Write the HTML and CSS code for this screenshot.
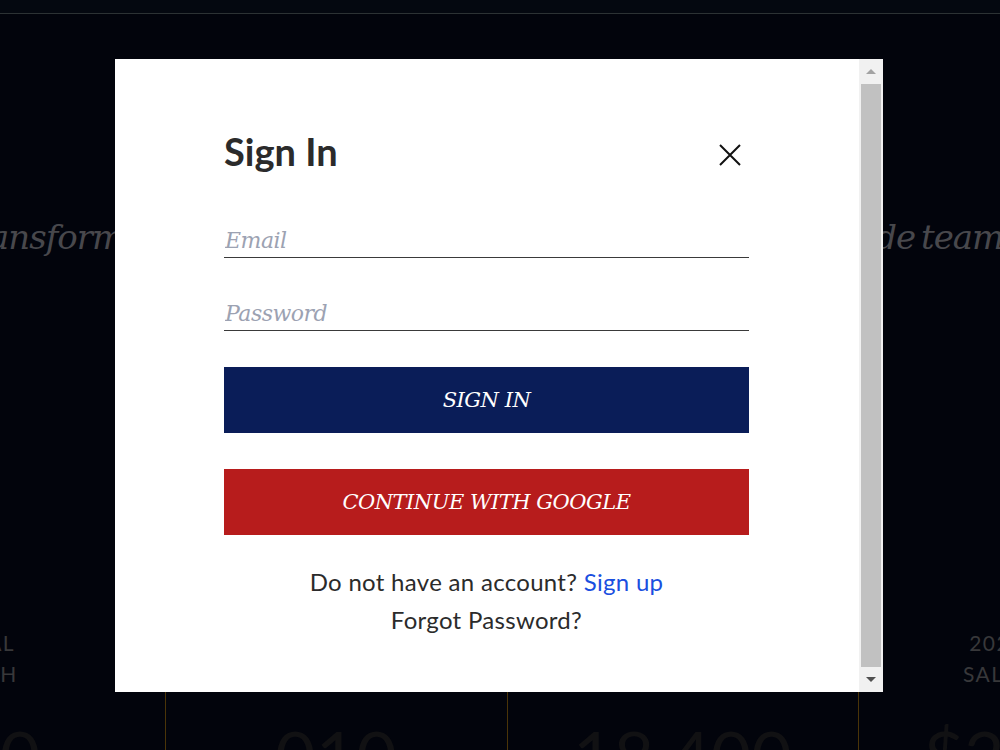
FILE: index.html
```html
<html lang="en">
<head>
    <meta charset="UTF-8">
    <meta name="viewport" content="width=device-width, initial-scale=1.0">
    <title>Sign In</title>
    <link rel="stylesheet" href="styles.css">
</head>
<body>
    <div class="topbar"></div>

    <div class="page">
        <p class="hero-line">We transform ideas into our products, built by world-class made teams</p>

        <div class="stats">
            <div class="stat stat-wide">
                <span class="stat-label">TOTAL<br>REACH</span>
                <span class="stat-num">240</span>
            </div>
            <div class="stat">
                <span class="stat-label">PROJECTS<br>DONE</span>
                <span class="stat-num">010</span>
            </div>
            <div class="stat stat-mid">
                <span class="stat-label">HAPPY<br>CLIENTS</span>
                <span class="stat-num">18,400</span>
            </div>
            <div class="stat stat-narrow">
                <span class="stat-label">2023<br>SALES</span>
                <span class="stat-num">$2M</span>
            </div>
        </div>
    </div>

    <div class="overlay">
        <div class="modal">
            <div class="modal-body">
                <div class="modal-head">
                    <h2>Sign In</h2>
                    <button class="close-btn" aria-label="Close">
                        <svg width="22" height="22" viewBox="0 0 22 22">
                            <path d="M1 1 L21 21 M21 1 L1 21" stroke="#111" stroke-width="2" fill="none"/>
                        </svg>
                    </button>
                </div>

                <form class="signin-form">
                    <input class="field" type="email" placeholder="Email">
                    <input class="field" type="password" placeholder="Password">
                    <button type="button" class="btn btn-primary">SIGN IN</button>
                    <button type="button" class="btn btn-google">CONTINUE WITH GOOGLE</button>
                </form>

                <div class="modal-foot">
                    <p>Do not have an account? <a href="#">Sign up</a></p>
                    <p>Forgot Password?</p>
                </div>
            </div>

            <div class="scrollbar">
                <span class="arrow up"></span>
                <div class="thumb"></div>
                <span class="arrow down"></span>
            </div>
        </div>
    </div>
</body>
</html>
```

FILE: styles.css
```css
body {
    margin: 0;
    padding: 0;
    background-color: #02040c;
    font-family: Lato, "Open Sans", sans-serif;
    height: 750px;
    overflow: hidden;
}

.topbar {
    height: 13px;
    background: #040810;
    border-bottom: 1px solid #2c3234;
}

.page {
    overflow: hidden;
}

/* big tagline behind the modal, wider than the window */
.hero-line {
    margin: 203px 0 0;
    text-indent: -95px;
    white-space: nowrap;
    font-family: "DejaVu Serif", serif;
    font-style: italic;
    font-size: 34px;
    color: #48484c;
    letter-spacing: -1px;
    word-spacing: -4px;
}

.stats {
    display: flex;
    justify-content: center;
    margin-top: 370px;
    padding-right: 71px;
}

.stat {
    flex: 0 0 341px;
    display: flex;
    flex-direction: column;
    align-items: center;
    border-left: 1px solid #4a3408;
    height: 140px;
}

.stat-wide {
    flex-basis: 370px;
    border-left: none;
}

.stat-mid {
    flex-basis: 350px;
}

.stat-narrow {
    flex-basis: 276px;
}

.stat-label {
    font-family: Lato, sans-serif;
    font-size: 21px;
    line-height: 31px;
    letter-spacing: 1.5px;
    color: #38383a;
    text-align: center;
}

.stat-num {
    margin-top: 26px;
    font-family: Lato, sans-serif;
    font-size: 70px;
    line-height: 80px;
    color: #111113;
}

.overlay {
    position: fixed;
    inset: 0;
    display: flex;
    align-items: center;
    justify-content: center;
}

.modal {
    width: 768px;
    height: 633px;
    margin-right: 2px;
    background: #fff;
    display: flex;
}

.modal-body {
    flex: 1;
    padding: 62px 110px 0 109px;
}

.modal-head {
    display: flex;
    justify-content: space-between;
    align-items: center;
}

.modal-head h2 {
    margin: 0;
    font-family: Lato, sans-serif;
    font-weight: 700;
    font-size: 38px;
    color: #2b2b2b;
    line-height: 60px;
}

.close-btn {
    background: none;
    border: none;
    padding: 0;
    margin: 8px 8px 0 0;
    cursor: pointer;
    display: flex;
}

.signin-form {
    display: flex;
    flex-direction: column;
    margin-top: 39px;
}

.field {
    border: none;
    border-bottom: 1px solid #3a3a3a;
    padding: 8px 0 4px 1px;
    font-family: "DejaVu Serif", serif;
    font-style: italic;
    font-size: 22px;
    outline: none;
    margin-bottom: 35px;
    letter-spacing: -0.5px;
}

.field::placeholder {
    color: #9ca2b2;
}

.btn {
    height: 66px;
    border: none;
    color: #fff;
    font-family: "DejaVu Serif", serif;
    font-style: italic;
    font-size: 21px;
    letter-spacing: -0.5px;
    cursor: pointer;
}

.btn-primary {
    background: #0a1d58;
    margin-top: 1px;
}

.btn-google {
    background: #b71c1c;
    margin-top: 36px;
}

.modal-foot {
    text-align: center;
    margin-top: 28px;
    font-size: 24px;
    letter-spacing: 0.3px;
    color: #2b2b2b;
}

.modal-foot p {
    margin: 0;
    line-height: 38px;
}

.modal-foot a {
    color: #1a4fe0;
    text-decoration: none;
}

/* fake scrollbar of the modal */
.scrollbar {
    width: 24px;
    background: #f1f1f1;
    display: flex;
    flex-direction: column;
    align-items: center;
}

.thumb {
    flex: 1;
    width: 20px;
    background: #c1c1c1;
}

.arrow {
    height: 25px;
    width: 24px;
    display: flex;
    align-items: center;
    justify-content: center;
}

.arrow::after {
    content: "";
    border-left: 5px solid transparent;
    border-right: 5px solid transparent;
}

.arrow.up::after {
    border-bottom: 5px solid #a3a3a3;
}

.arrow.down::after {
    border-top: 5px solid #505050;
}
```
